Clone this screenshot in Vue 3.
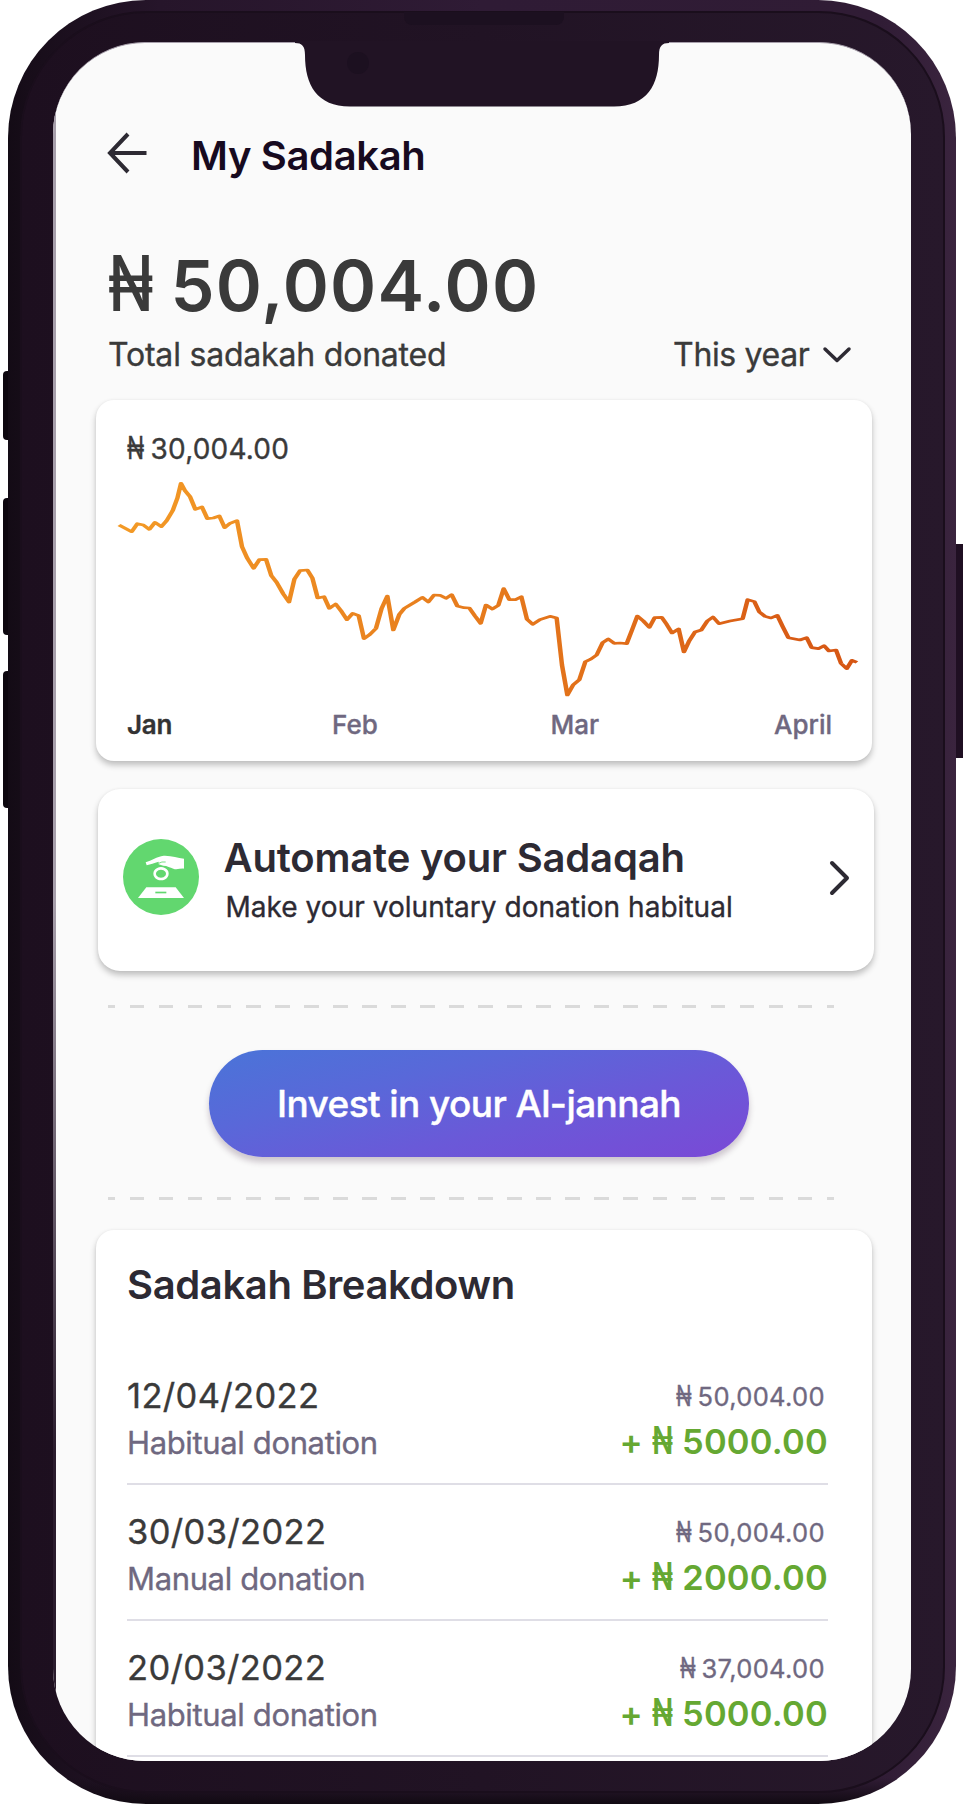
<script setup>
import { computed } from 'vue'

const months = [
  { label: 'Jan', active: true },
  { label: 'Feb' },
  { label: 'Mar' },
  { label: 'April' },
]

const donations = [
  { date: '12/04/2022', kind: 'Habitual donation', balance: '50,004.00', amount: '5000.00' },
  { date: '30/03/2022', kind: 'Manual donation', balance: '50,004.00', amount: '2000.00' },
  { date: '20/03/2022', kind: 'Habitual donation', balance: '37,004.00', amount: '5000.00' },
]

// The trend is stretched sideways so steep runs read heavier than flat ones.
const STRETCH = 1.7
const series = [
  [87, 225], [125, 245], [142, 221], [160, 225], [178, 238], [195, 217], [214, 230], [230, 212], [248, 182],
  [262, 145], [273, 100], [285, 122], [300, 140], [316, 178], [336, 171], [352, 206], [370, 204], [388, 198],
  [404, 233], [420, 220], [441, 212], [456, 290], [472, 325], [491, 355], [508, 329], [528, 328], [544, 377],
  [560, 397], [580, 432], [597, 456], [613, 388], [630, 362], [652, 360], [667, 384], [683, 444], [702, 440],
  [718, 475], [737, 462], [755, 485], [771, 509], [788, 490], [806, 497], [822, 566], [840, 553], [858, 535],
  [875, 475], [892, 438], [910, 540], [928, 493], [943, 475], [975, 456], [997, 442], [1015, 456], [1032, 435],
  [1050, 436], [1068, 445], [1085, 434], [1102, 468], [1120, 473], [1138, 474], [1155, 498], [1172, 520],
  [1188, 465], [1207, 477], [1225, 466], [1241, 416], [1258, 449], [1276, 449], [1294, 440], [1311, 508],
  [1328, 523], [1350, 509], [1380, 499], [1400, 504], [1416, 645], [1432, 735], [1450, 704], [1468, 689],
  [1486, 635], [1503, 627], [1520, 615], [1538, 578], [1555, 567], [1573, 580], [1590, 579], [1610, 581],
  [1626, 540], [1642, 498], [1660, 513], [1678, 532], [1694, 503], [1715, 502], [1730, 523], [1746, 549],
  [1766, 537], [1782, 606], [1798, 572], [1815, 546], [1834, 540], [1852, 513], [1869, 501], [1887, 521],
  [1920, 513], [1958, 506], [1973, 449], [1993, 455], [2008, 486], [2025, 499], [2043, 504], [2062, 496],
  [2078, 530], [2095, 563], [2130, 570], [2150, 563], [2165, 593], [2185, 596], [2202, 587], [2217, 603],
  [2238, 600], [2253, 640], [2270, 656], [2286, 631], [2301, 637],
]
const line = computed(() => series.map(([x, y]) => `${(x / STRETCH).toFixed(1)},${y}`).join(' '))
</script>

<template>
  <div class="stage">
    <i class="key left k1"></i>
    <i class="key left k2"></i>
    <i class="key left k3"></i>
    <i class="key right"></i>
    <div class="phone">
      <div class="rim"></div>
      <div class="speaker"></div>
      <main class="screen">
        <header class="header">
          <svg class="back" width="40" height="42" viewBox="0 0 40 42" fill="none">
            <path d="M21 2 L3 21 L21 40 M3 21 H39.5" />
          </svg>
          <h1>My Sadakah</h1>
        </header>

        <div class="total"><span class="naira"><b>₦</b></span>50,004.00</div>
        <div class="caption">
          <span>Total sadakah donated</span>
          <div class="period">
            <span>This year</span>
            <svg width="30" height="18" viewBox="0 0 30 18" fill="none"><path d="M3 3 L15 14.5 L27 3" /></svg>
          </div>
        </div>

        <section class="card chart-card">
          <div class="peak"><span class="naira"><b>₦</b></span>30,004.00</div>
          <svg class="chart" width="742" height="218" viewBox="81 90 2226 654" fill="none">
            <defs>
              <linearGradient id="trend" gradientUnits="userSpaceOnUse" x1="50" y1="0" x2="1350" y2="0">
                <stop offset="0" stop-color="#f39a26" />
                <stop offset=".5" stop-color="#e67a1c" />
                <stop offset="1" stop-color="#d65614" />
              </linearGradient>
            </defs>
            <polyline :points="line" :transform="`scale(${STRETCH} 1)`" stroke="url(#trend)" />
          </svg>
          <div class="months">
            <span v-for="m in months" :key="m.label" :class="{ active: m.active }">{{ m.label }}</span>
          </div>
        </section>

        <section class="card automate">
          <svg class="badge" width="76" height="76" viewBox="0 0 228 228">
            <circle cx="114" cy="114" r="114" fill="#62d76f" />
            <g fill="#fff">
              <path d="M68 70 C86 64 101 53 122 50 C146 49 163 57 183 59 V89 C172 88 160 93 151 89 C141 86 133 80 121 80 L107 76 V68 C93 72 83 76 71 79 Z" />
              <path fill-rule="evenodd" d="M114 84 a23 20 0 1 0 .1 0 Z M114 92 a15 12 0 1 1 -.1 0 Z" />
              <path d="M70 145 H158 L183 177 H45 Z" />
            </g>
            <rect x="97" y="158" width="33" height="5" fill="#62d76f" />
            <path d="M107 73 Q116 67 128 69" stroke="#62d76f" stroke-width="2.500" fill="none" />
          </svg>
          <div class="copy">
            <h2>Automate your Sadaqah</h2>
            <p>Make your voluntary donation habitual</p>
          </div>
          <svg class="chevron" width="22" height="38" viewBox="0 0 22 38" fill="none"><path d="M3 4 L18 19 L3 34" /></svg>
        </section>

        <hr class="dashes" />
        <button class="cta">Invest in your Al-jannah</button>
        <hr class="dashes second" />

        <section class="card breakdown">
          <h2>Sadakah Breakdown</h2>
          <ul>
            <li v-for="d in donations" :key="d.date">
              <div>
                <div class="date">{{ d.date }}</div>
                <div class="kind">{{ d.kind }}</div>
              </div>
              <div class="figures">
                <div class="balance"><span class="naira"><b>₦</b></span>{{ d.balance }}</div>
                <div class="amount"><span class="plus">+</span><span class="naira"><b>₦</b></span>{{ d.amount }}</div>
              </div>
            </li>
          </ul>
        </section>
      </main>
      <svg class="notch" width="374" height="66" viewBox="0 0 374 66">
        <path d="M0 0 H374 V2 C367 2 364 5 364 14 C364 44 352 65.500 319 65.500 H55 C22 65.500 10 44 10 14 C10 5 7 2 0 2 Z" fill="#211324" />
        <circle cx="63" cy="22" r="11" fill="#1c1020" />
      </svg>
    </div>
  </div>
</template>

<style>
body {
  margin: 0;
  background: #fff;
}
</style>

<style scoped>
.stage {
  position: relative;
  width: 963px;
  height: 1804px;
  overflow: hidden;
  font-family: Inter, "Liberation Sans", sans-serif;
  font-weight: 400;
  white-space: nowrap;
  color: #3a3a3a;
}
h1, h2, p, ul {
  margin: 0;
  padding: 0;
  font-weight: inherit;
  list-style: none;
}
.key {
  position: absolute;
  background: #0d070f;
}
.key.left {
  left: 3px;
  width: 8px;
  border-radius: 4px 0 0 4px;
}
.k1 { top: 371px; height: 69px; }
.k2 { top: 498px; height: 137px; }
.k3 { top: 671px; height: 137px; }
.key.right {
  right: 0;
  top: 544px;
  width: 10px;
  height: 214px;
  background: #1f0f22;
}
.phone {
  position: absolute;
  left: 8px;
  top: 0;
  width: 948px;
  height: 1804px;
  border-radius: 138px;
  background:
    linear-gradient(0deg, #110a12 0, rgba(17, 10, 18, 0) 26px),
    linear-gradient(90deg, #130b15 0, #170d19 2%, #26152a 16%, #2f1b35 50%, #301c35 92%, #3a243e 100%);
  overflow: hidden;
}
.rim {
  position: absolute;
  inset: 11px 11px 11px 12px;
  border: 2px solid #1a0e1c;
  border-radius: 126px;
  background: linear-gradient(90deg, #1d0f1f, #211324 50%, #27182b);
}
.speaker {
  position: absolute;
  left: 396px;
  top: 12px;
  width: 160px;
  height: 13px;
  border-radius: 0 0 8px 8px;
  background: #1c1020;
}
.screen {
  position: absolute;
  left: 45px;
  top: 42px;
  width: 858px;
  height: 1719px;
  box-sizing: border-box;
  border-top: 1px solid #a79fab;
  border-radius: 92px;
  background:
    linear-gradient(180deg, #a79fab 0, #a79fab 50%, #2a1c2d 82%) left / 3px 100% no-repeat,
    #fafafa;
  overflow: hidden;
  padding: 88px 39px 0 43px;
}
.notch {
  position: absolute;
  left: 287px;
  top: 41px;
}
.caption,
.peak,
.copy p,
.date,
.kind,
.balance {
  -webkit-text-stroke: .35px currentColor;
}
.naira {
  display: inline-block;
  letter-spacing: 0;
  text-align: left;
}
.naira b {
  display: inline-block;
  font-weight: inherit;
  transform: scale(.8, 1.1);
  transform-origin: 0 79%;
}
.header {
  display: flex;
  height: 48px;
  padding-left: 11px;
  gap: 44px;
}
.back {
  margin-top: 1px;
}
.header h1 {
  margin-top: 1px;
  font-size: 40px;
  line-height: 48px;
  font-weight: 600;
  letter-spacing: -.35px;
  color: #170a1f;
}
.back path {
  stroke: #2d2a33;
  stroke-width: 4;
}
.total {
  margin: 65px 0 0 12px;
  height: 85px;
  font-size: 70px;
  line-height: 84px;
  font-weight: 600;
  letter-spacing: 1.200px;
}
.total .naira {
  width: 62.500px;
}
.total .naira b {
  font-weight: 500;
  transform: scale(.85, 1.1);
}
.caption {
  display: flex;
  justify-content: space-between;
  margin: 6px 20px 0 12px;
  height: 40px;
  font-size: 32px;
  line-height: 40px;
  letter-spacing: -.2px;
}
.period {
  display: flex;
  align-items: center;
  gap: 12.500px;
}
.period span {
  letter-spacing: -.35px;
}
.period path {
  stroke: #2d2a33;
  stroke-width: 3.500;
  stroke-linecap: round;
  stroke-linejoin: round;
}
.card {
  box-sizing: border-box;
  width: 776px;
  background: #fff;
  border-radius: 18px;
  box-shadow: 0 4px 6px rgba(0, 0, 0, .24), 0 0 3px rgba(0, 0, 0, .05);
}
.chart-card {
  margin-top: 25px;
  height: 361px;
  padding-top: 32px;
}
.peak {
  height: 34px;
  margin-left: 31px;
  font-size: 28px;
  line-height: 34px;
  letter-spacing: .2px;
}
.peak .naira {
  width: 23.500px;
}
.chart {
  display: block;
  margin: 14px 0 0 21px;
}
.chart polyline {
  stroke-width: 8;
  stroke-linejoin: round;
}
.months {
  display: grid;
  grid-template-columns: 205px 218.500px 223.500px auto;
  margin: 11px 0 0 31px;
  font-size: 26px;
  line-height: 32px;
  font-weight: 500;
  -webkit-text-stroke: .35px currentColor;
  color: #6f6880;
}
.months .active {
  font-weight: 600;
  letter-spacing: -.3px;
  color: #333;
}
.automate {
  display: flex;
  margin: 28px 0 0 2px;
  height: 182px;
  border-radius: 22px;
  padding: 45px 0 0 25px;
  color: #2d2a33;
}
.badge {
  margin-top: 5px;
}
.copy {
  flex: 1;
  margin-left: 24.500px;
}
.copy h2 {
  font-size: 40px;
  line-height: 48px;
  font-weight: 600;
  letter-spacing: -.18px;
}
.copy p {
  margin: 8px 0 0 2px;
  font-size: 28px;
  line-height: 34px;
  letter-spacing: .03px;
}
.chevron {
  margin: 25px 23px 0 0;
}
.chevron path {
  stroke: #2d2a33;
  stroke-width: 4;
  stroke-linecap: round;
  stroke-linejoin: round;
}
.dashes {
  width: 726px;
  height: 3px;
  margin: 34px 0 0 12px;
  border: 0;
  background: repeating-linear-gradient(90deg, #dadada 0 7.300px, transparent 7.300px 21.780px, #dadada 21.780px 29.040px);
}
.dashes.second {
  margin-top: 40px;
}
.cta {
  display: block;
  width: 540px;
  height: 107px;
  margin: 42px 0 0 113px;
  padding: 0;
  border: 0;
  border-radius: 54px;
  background: linear-gradient(165deg, #4a74d8 0%, #5968d9 32%, #6a59d8 62%, #7a49d6 100%);
  box-shadow: 0 5px 6px rgba(40, 10, 40, .22);
  font: 500 37px/108px Inter, sans-serif;
  letter-spacing: -.58px;
  -webkit-text-stroke: .4px currentColor;
  color: #fff;
}
.breakdown {
  margin-top: 30px;
  height: 620px;
  padding: 31px 44px 0 31px;
}
.breakdown h2 {
  font-size: 40px;
  line-height: 48px;
  font-weight: 600;
  letter-spacing: -.38px;
  color: #2d2a33;
  margin-bottom: 40px;
}
.breakdown li {
  display: flex;
  justify-content: space-between;
  box-sizing: border-box;
  height: 136px;
  padding-top: 27px;
  border-bottom: 2px solid #dfdee6;
}
.date {
  font-size: 34.500px;
  line-height: 40px;
  letter-spacing: .35px;
}
.kind {
  margin: 8px 0 0 0;
  font-size: 31px;
  line-height: 38px;
  letter-spacing: -.36px;
  color: #6f6880;
}
.figures {
  text-align: right;
}
.balance {
  margin: 6px 3px 0 0;
  font-size: 25.500px;
  line-height: 30px;
  letter-spacing: .35px;
  color: #6f6880;
}
.balance .naira {
  width: 21.500px;
}
.amount {
  margin-top: 9px;
  font-size: 34.500px;
  line-height: 42px;
  font-weight: 600;
  letter-spacing: .2px;
  color: #65a832;
}
.amount .naira {
  width: 30.500px;
}
.plus {
  display: inline-block;
  width: 32px;
  text-align: left;
}
</style>
